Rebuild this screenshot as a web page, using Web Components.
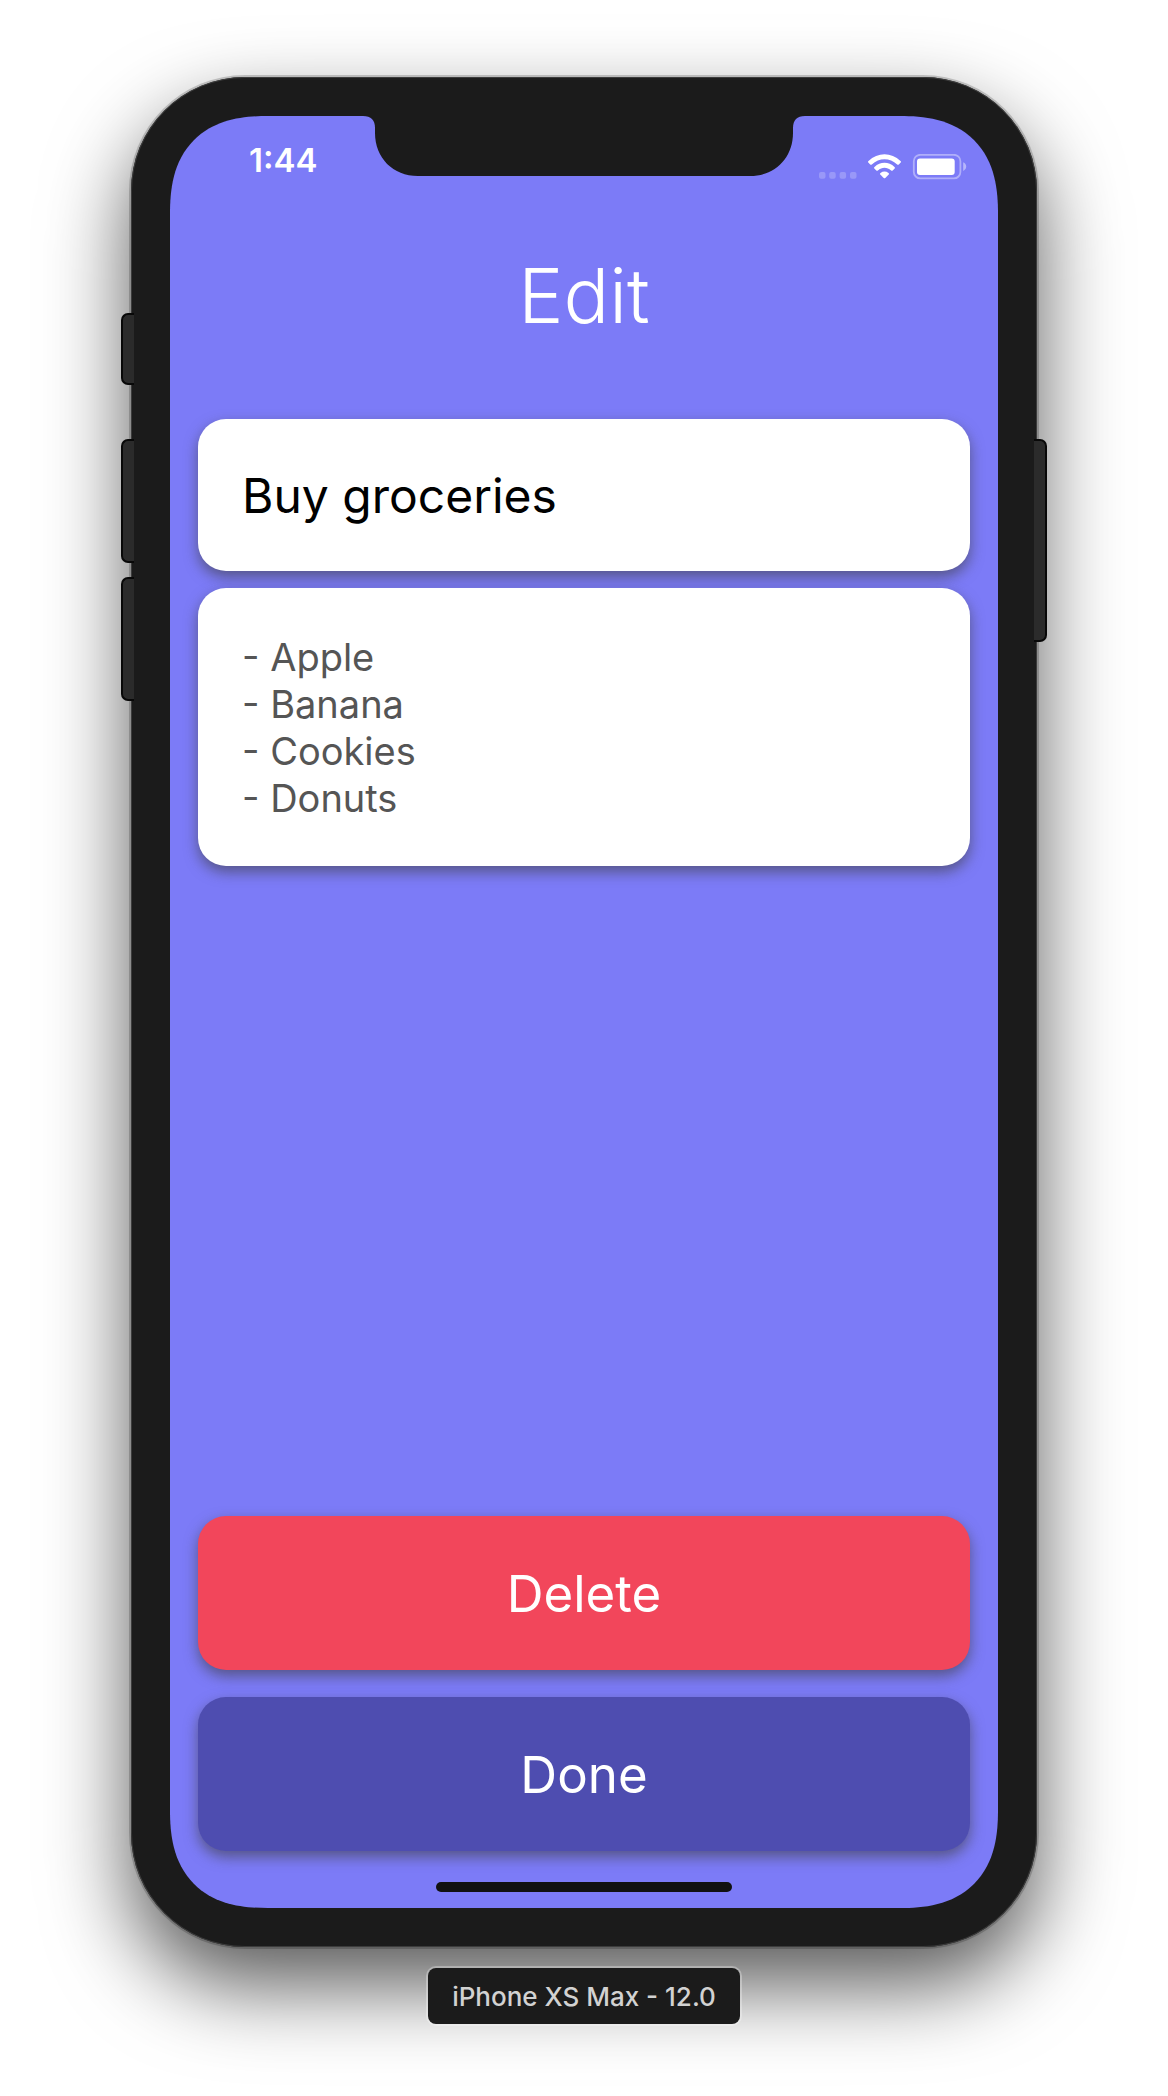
<!DOCTYPE html>
<html lang="en">
<head>
<meta charset="utf-8">
<meta name="viewport" content="width=device-width, initial-scale=1">
<title>Edit</title>
<style>
  body { margin: 0; background: #fff; font-family: Inter, "Liberation Sans", sans-serif; }
</style>
</head>
<body>
<simulator-stage>
  <phone-frame>
    <status-bar>1:44</status-bar>
    <edit-screen></edit-screen>
  </phone-frame>
  <device-label>iPhone XS Max - 12.0</device-label>
</simulator-stage>
<script>
const define = (name, html, setup) => {
  const template = document.createElement('template');
  template.innerHTML = html;
  customElements.define(name, class extends HTMLElement {
    constructor() {
      super();
      this.attachShadow({ mode: 'open' }).append(template.content.cloneNode(true));
    }
    connectedCallback() { if (setup) setup(this, this.shadowRoot); }
  });
};

define('simulator-stage', `
  <style>
    :host { display: flex; flex-direction: column; align-items: center; gap: 21px;
      box-sizing: border-box; min-height: 100vh; padding: 77px 121px 72px; overflow: hidden; }
  </style>
  <slot></slot>`);

define('phone-frame', `
  <style>
    :host { display: grid; grid-template-columns: 10px minmax(0, 1fr) 10px; flex: 1; align-self: stretch; }
    .rail { display: flex; flex-direction: column; z-index: 1; }
    .left { padding-top: 236px; }
    .right { padding-top: 362px; align-items: flex-end; }
    .key { box-sizing: border-box; width: 13px; height: 124px; background: #2b2b2b; border: 2px solid #080808; }
    .left .key { border-right: 0; border-radius: 7px 0 0 7px; }
    .right .key { border-left: 0; border-radius: 0 7px 7px 0; height: 203px; }
    .left .mute { height: 72px; margin-bottom: 54px; }
    .left .up { margin-bottom: 14px; }
    .body { display: flex; padding: 39px; background: #1b1b1b; border-radius: 114px;
      box-shadow: inset 0 0 0 1px #3c3c3c, 0 0 0 2px rgba(0,0,0,.18), 0 38px 84px rgba(0,0,0,.66); }
    .screen { flex: 1; min-width: 0; display: flex; flex-direction: column; background: #7c7bf7;
      border-radius: 80px; overflow: hidden; }
    @supports (corner-shape: superellipse(1.3)) {
      .screen { border-radius: 98px; corner-shape: superellipse(1.3); }
    }
    .home { align-self: center; width: 36%; max-width: 296px; height: 10px; margin: 31px 0 16px;
      border-radius: 5px; background: #111; }
  </style>
  <div class="rail left"><div class="key mute"></div><div class="key up"></div><div class="key"></div></div>
  <div class="body"><div class="screen"><slot></slot><div class="home"></div></div></div>
  <div class="rail right"><div class="key"></div></div>`);

define('status-bar', `
  <style>
    :host { display: grid; grid-template-columns: minmax(0, 1fr) 442px minmax(0, 1fr); height: 88px; color: #fff; }
    .time { padding: 24px 0 0 79px; font-size: 33px; line-height: 40px; font-weight: 600; }
    svg { display: block; }
    .icons { display: flex; justify-content: flex-end; padding: 38px 31px 0 0; }
  </style>
  <div class="time"><slot></slot></div>
  <svg width="442" height="60" viewBox="0 0 442 60" aria-hidden="true">
    <path fill="#1b1b1b" d="M0 0C8 0 12 4 12 12V17C12 42 30 60 55 60H387C412 60 430 42 430 17V12C430 4 434 0 442 0Z"/>
  </svg>
  <div class="icons">
    <svg width="148" height="26" viewBox="0 0 148 26" fill="#fff" aria-hidden="true">
      <g opacity=".22">
        <rect x="0" y="18" width="6.5" height="6.8" rx="2"/><rect x="10.2" y="18" width="6.5" height="6.8" rx="2"/>
        <rect x="20.6" y="18" width="6.5" height="6.8" rx="2"/><rect x="31" y="18" width="6.5" height="6.8" rx="2"/>
      </g>
      <path d="M49.3 8.6Q48.600 7.700 49.500 6.900C58.700-2.100 72.300-2.100 81.500 6.900Q82.400 7.700 81.700 8.600L79.800 10.500Q79 11.200 78.200 10.500C70.700 3.500 60.300 3.500 52.800 10.500Q52 11.200 51.200 10.500Z"/>
      <path d="M55.300 14.600Q54.600 13.700 55.500 12.900C61.300 7.400 69.700 7.400 75.500 12.900Q76.400 13.700 75.700 14.600L73.700 16.500Q72.900 17.200 72.100 16.500C68.100 12.900 62.900 12.900 58.900 16.500Q58.100 17.200 57.300 16.500Z"/>
      <path d="M61.300 20.600Q60.500 19.700 61.500 18.900C63.900 17.100 67.100 17.100 69.500 18.900Q70.500 19.700 69.700 20.600L66.300 24Q65.500 24.700 64.700 24Z"/>
      <rect x="94.800" y=".8" width="46.600" height="23.600" rx="6.500" fill="none" stroke="#fff" stroke-width="1.800" opacity=".4"/>
      <rect x="98" y="4.500" width="37.700" height="16.500" rx="3"/>
      <path opacity=".45" d="M144.200 8.200Q147.200 9.600 147.200 12.600T144.200 17Z"/>
    </svg>
  </div>`);

define('edit-screen', `
  <style>
    :host { flex: 1; display: flex; flex-direction: column; padding: 43px 28px 0; }
    h1 { margin: 0 0 76px; font-size: 76px; line-height: 96px; font-weight: 300; text-align: center; color: #fff; }
    form { flex: 1; display: flex; flex-direction: column; }
    .fields { flex: 1; display: flex; flex-direction: column; gap: 17px; }
    .actions { display: flex; flex-direction: column; gap: 27px; }
  </style>
  <h1>Edit</h1>
  <form>
    <div class="fields">
      <note-title label="Title" value="Buy groceries"></note-title>
      <note-body label="Notes">- Apple
- Banana
- Cookies
- Donuts</note-body>
    </div>
    <div class="actions">
      <action-button style="--fill: #f2465b">Delete</action-button>
      <action-button style="--fill: #4e4db0">Done</action-button>
    </div>
  </form>`);

const card = `
    :host { display: block; }
    .card { box-sizing: border-box; display: block; width: 100%; margin: 0; border: 0; outline: 0;
      border-radius: 28px; font-family: inherit; box-shadow: 0 6px 14px rgba(60,60,60,.6); }`;

define('note-title', `
  <style>${card}
    input { height: 152px; padding: 0 44px; background: #fff; color: #000; font-size: 48px; font-weight: 400; }
  </style>
  <input class="card" type="text">`,
  (host, root) => {
    const input = root.querySelector('input');
    input.value = host.getAttribute('value');
    input.setAttribute('aria-label', host.getAttribute('label'));
  });

define('note-body', `
  <style>${card}
    textarea { padding: 46px 44px 44px; background: #fff; color: #555; font-size: 38px; line-height: 47px;
      resize: none; overflow: hidden; }
  </style>
  <textarea class="card" rows="4"></textarea>`,
  (host, root) => {
    const area = root.querySelector('textarea');
    area.value = host.textContent;
    area.setAttribute('aria-label', host.getAttribute('label'));
  });

define('action-button', `
  <style>${card}
    button { padding: 46px 45px 44px; background: var(--fill); color: #fff; font-size: 51px; line-height: 64px; font-weight: 400; }
  </style>
  <button class="card" type="button"><slot></slot></button>`);

define('device-label', `
  <style>
    :host { display: block; padding: 13px 24px 11px; border-radius: 8px; background: #1b1b1b; color: #d2d2d2;
      font-size: 26px; line-height: 32px; font-weight: 500; box-shadow: 0 0 0 2px rgba(255,255,255,.3); }
  </style>
  <slot></slot>`);
</script>
</body>
</html>
